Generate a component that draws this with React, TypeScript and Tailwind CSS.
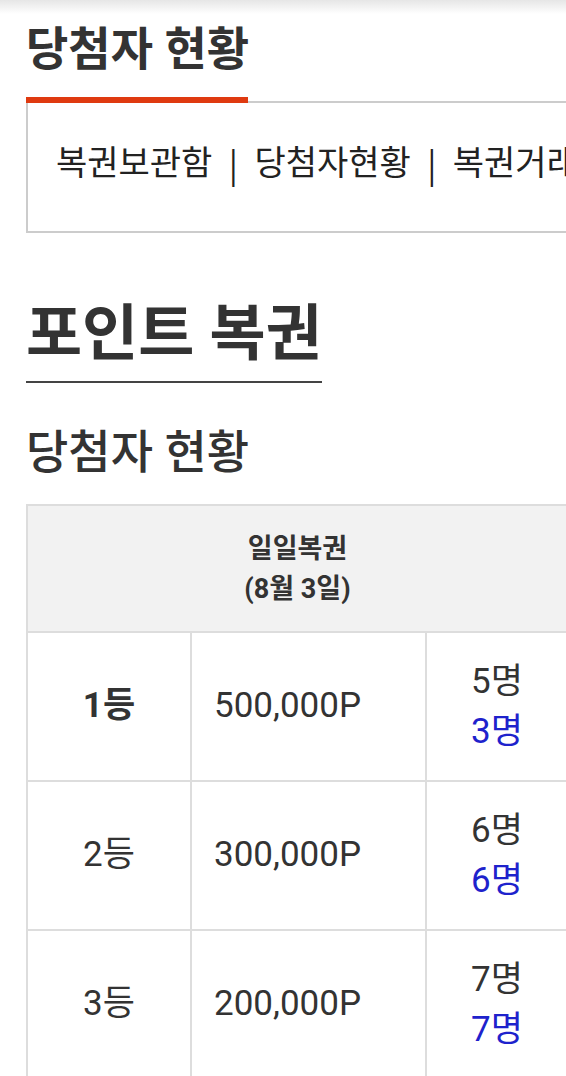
const rows = [
  { rank: "1등", bold: true, prize: "500,000P", total: "5명", won: "3명" },
  { rank: "2등", bold: false, prize: "300,000P", total: "6명", won: "6명" },
  { rank: "3등", bold: false, prize: "200,000P", total: "7명", won: "7명" },
];

const menu = ["복권보관함", "당첨자현황", "복권거래소"];

export default function App() {
  return (
    <div className="min-h-[1076px] w-[566px] overflow-hidden bg-white font-['Roboto','Noto_Sans_CJK_KR',sans-serif] text-[#333]">
      <div className="h-[14px] bg-linear-to-b from-[#e6e6e6] to-white" />
      <div className="w-[620px] pl-[26px]">
        <h2 className="mt-[10px] text-[46px] font-bold leading-[50px]">당첨자 현황</h2>

        {/* tab bar */}
        <div className="mt-[23px] flex h-[6px] items-end">
          <div className="h-[6px] w-[222px] bg-[#df3a10]" />
          <div className="h-[2px] flex-1 bg-[#cccccc]" />
        </div>
        <div className="flex h-[130px] items-center whitespace-nowrap border-2 border-t-0 border-[#cccccc] pb-[8px] pl-[28px] text-[34px] text-[#222]">
          {menu.map((m, i) => (
            <span key={m} className="flex items-center">
              {i > 0 && (
                <span className="inline-block w-[42px] text-center font-['Noto_Sans_CJK_KR',sans-serif]">|</span>
              )}
              {m}
            </span>
          ))}
        </div>

        <h1 className="mt-[69px] inline-block border-b-2 border-[#444] pb-[15px] text-[61px] font-bold leading-[64px]">
          포인트 복권
        </h1>

        <h3 className="mt-[44px] text-[46px] font-medium leading-[50px]">당첨자 현황</h3>

        <div className="mt-[27px] grid w-[543px] grid-cols-[164px_235px_142px] border-l-2 border-t-2 border-[#dddddd]">
          <div className="col-span-3 flex h-[127px] flex-col items-center justify-center border-b-2 border-r-2 border-[#dddddd] bg-[#f2f2f2] text-[27px] font-bold leading-[40px]">
            <p>일일복권</p>
            <p>(8월 3일)</p>
          </div>
          {rows.map((r) => (
            <div key={r.rank} className="contents">
              <div
                className={`flex h-[149px] items-center justify-center border-b-2 border-r-2 border-[#dddddd] text-[35px] ${
                  r.bold ? "font-bold" : ""
                }`}
              >
                {r.rank}
              </div>
              <div className="flex h-[149px] items-center border-b-2 border-r-2 border-[#dddddd] pl-[22px] text-[35px]">
                {r.prize}
              </div>
              <div className="flex h-[149px] flex-col items-center justify-center border-b-2 border-r-2 border-[#dddddd] text-[35px] leading-[50px]">
                <p>{r.total}</p>
                <p className="text-[#1e22cc]">{r.won}</p>
              </div>
            </div>
          ))}
        </div>
      </div>
    </div>
  );
}
